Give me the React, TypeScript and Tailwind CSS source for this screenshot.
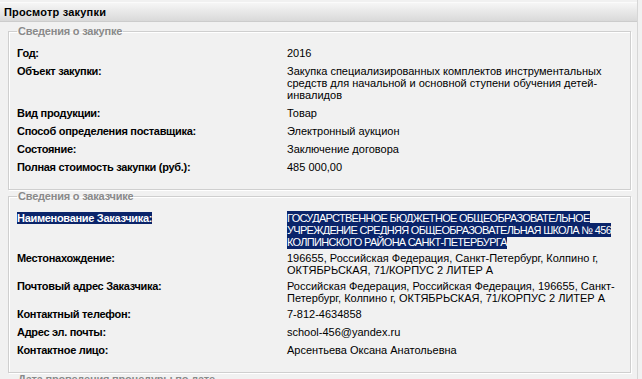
import React from 'react';

type Row = {
  label: string;
  value: React.ReactNode;
  selected?: boolean;
  tight?: boolean;
};

const purchaseRows: Row[] = [
  { label: 'Год:', value: '2016' },
  {
    label: 'Объект закупки:',
    value:
      'Закупка специализированных комплектов инструментальных средств для начальной и основной ступени обучения детей-инвалидов',
  },
  { label: 'Вид продукции:', value: 'Товар' },
  { label: 'Способ определения поставщика:', value: 'Электронный аукцион' },
  { label: 'Состояние:', value: 'Заключение договора' },
  { label: 'Полная стоимость закупки (руб.):', value: '485 000,00' },
];

const customerRows: Row[] = [
  {
    label: 'Наименование Заказчика:',
    value:
      'ГОСУДАРСТВЕННОЕ БЮДЖЕТНОЕ ОБЩЕОБРАЗОВАТЕЛЬНОЕ УЧРЕЖДЕНИЕ СРЕДНЯЯ ОБЩЕОБРАЗОВАТЕЛЬНАЯ ШКОЛА № 456 КОЛПИНСКОГО РАЙОНА САНКТ-ПЕТЕРБУРГА',
    selected: true,
    tight: true,
  },
  {
    label: 'Местонахождение:',
    value: '196655, Российская Федерация, Санкт-Петербург, Колпино г, ОКТЯБРЬСКАЯ, 71/КОРПУС 2 ЛИТЕР А',
    tight: true,
  },
  {
    label: 'Почтовый адрес Заказчика:',
    value:
      'Российская Федерация, Российская Федерация, 196655, Санкт-Петербург, Колпино г, ОКТЯБРЬСКАЯ, 71/КОРПУС 2 ЛИТЕР А',
    tight: true,
  },
  { label: 'Контактный телефон:', value: '7-812-4634858' },
  { label: 'Адрес эл. почты:', value: 'school-456@yandex.ru' },
  { label: 'Контактное лицо:', value: 'Арсентьева Оксана Анатольевна' },
];

const InfoGroup: React.FC<{ title: string; rows: Row[] }> = ({ title, rows }) => (
  <fieldset className="mx-[8px] border border-[#cfcfcf] pl-[8px] pr-[8px] pb-[13px] pt-[6px] shadow-[inset_1px_1px_0_#ffffff,1px_1px_0_#ffffff]">
    <legend className="px-[1px] text-[11px] font-bold leading-[13px] tracking-[-0.2px] text-[#8a8a8a]">{title}</legend>
    <div className="grid grid-cols-[270px_335px]">
      {rows.map((row) => (
        <React.Fragment key={row.label}>
          <div
            className={
              row.tight
                ? 'pb-[1px] pt-[3px] text-[11px] font-bold leading-[12px] tracking-[-0.3px]'
                : 'py-[3px] text-[11px] font-bold leading-[12px] tracking-[-0.3px]'
            }
          >
            {row.selected ? <span className="bg-[#0a246a] text-white">{row.label}</span> : row.label}
          </div>
          <div className={row.tight ? 'pb-[1px] pt-[3px] text-[11px] leading-[12px]' : 'py-[3px] text-[11px] leading-[12px]'}>
            {row.selected ? (
              <span className="bg-[#0a246a] py-[1px] tracking-[-0.7px] text-white [box-decoration-break:clone]">
                {row.value}
              </span>
            ) : (
              row.value
            )}
          </div>
        </React.Fragment>
      ))}
    </div>
  </fieldset>
);

export default function App() {
  return (
    <div
      className="h-[379px] w-[642px] overflow-hidden bg-[#f1f1f1] text-black"
      style={{ fontFamily: '"Liberation Sans", Arial, sans-serif' }}
    >
      <div className="w-[638px] border-r border-[#d6d6d6] pt-[2px]">
        <div className="flex h-[20px] items-center border-b border-t border-b-[#cccccc] border-t-[#fbfbfb] bg-gradient-to-b from-[#f6f6f6] to-[#d9d9d9] px-[4px] text-[11px] font-bold tracking-[0.2px]">
          Просмотр закупки
        </div>
        <div className="flex flex-col pt-[3px]">
          <InfoGroup title="Сведения о закупке" rows={purchaseRows} />
          <InfoGroup title="Сведения о заказчике" rows={customerRows} />
          <InfoGroup title="Дата проведения процедуры по дате" rows={[]} />
        </div>
      </div>
    </div>
  );
}
